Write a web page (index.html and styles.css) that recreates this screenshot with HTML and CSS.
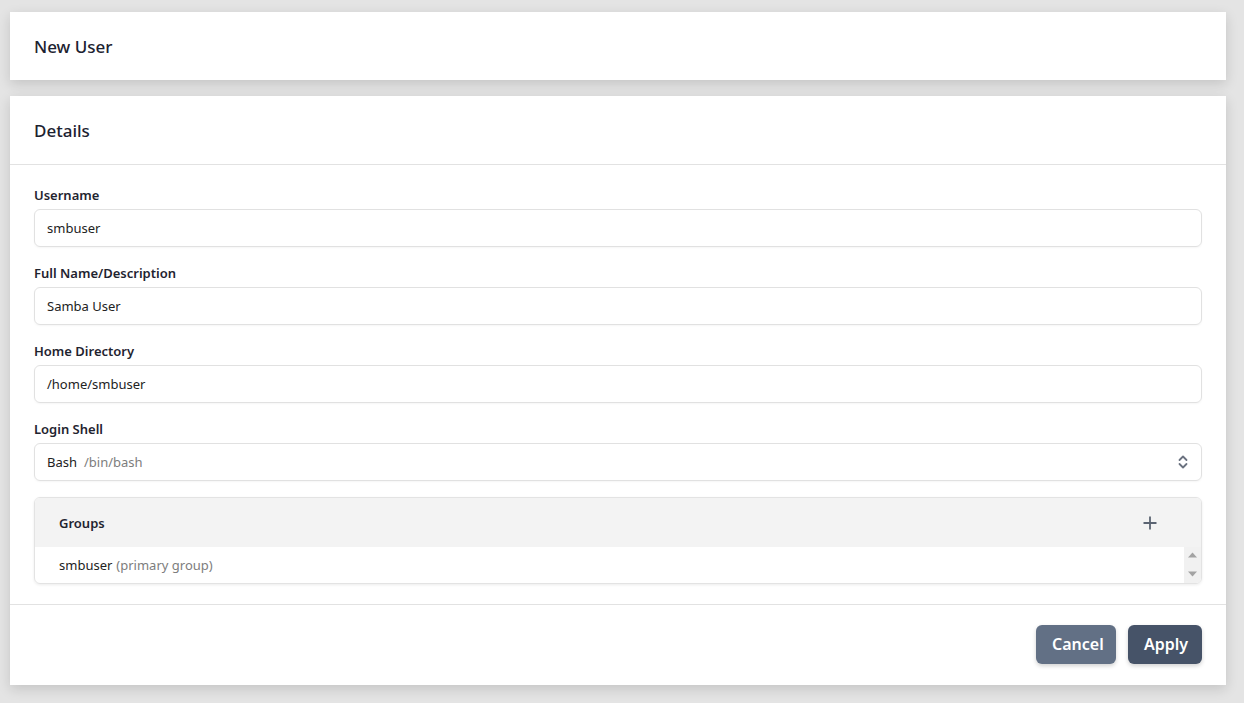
FILE: index.html
```html
<!DOCTYPE html>
<html>
<head>
<meta charset="utf-8">
<link rel="stylesheet" href="styles.css">
</head>
<body>
<div class="page">
  <section class="card title-card">
    <h1 class="card-title">New User</h1>
  </section>
  <section class="card">
    <header class="card-header"><h2 class="card-title">Details</h2></header>
    <div class="card-body">
      <div class="field">
        <label class="label">Username</label>
        <div class="input">smbuser</div>
      </div>
      <div class="field">
        <label class="label">Full Name/Description</label>
        <div class="input">Samba User</div>
      </div>
      <div class="field">
        <label class="label">Home Directory</label>
        <div class="input">/home/smbuser</div>
      </div>
      <div class="field">
        <label class="label">Login Shell</label>
        <div class="input select">
          <span>Bash</span><span class="muted shell-path">/bin/bash</span>
          <svg class="chev" width="12" height="16" viewBox="0 0 12 16"><path d="M2.5 6 6 2.5 9.5 6M2.5 10 6 13.5 9.5 10" fill="none" stroke="#6b7280" stroke-width="1.8" stroke-linecap="round" stroke-linejoin="round"/></svg>
        </div>
      </div>
      <div class="groups">
        <div class="groups-head">
          <span class="groups-title">Groups</span>
          <svg class="plus" width="16" height="16" viewBox="0 0 16 16"><path d="M8 1.5v13M1.5 8h13" stroke="#5b6472" stroke-width="1.8" fill="none"/></svg>
        </div>
        <div class="groups-list">
          <div class="group-row">smbuser <span class="muted">(primary group)</span></div>
          <div class="scrollbar">
            <svg width="9" height="6" viewBox="0 0 9 6"><path d="M0 5.5 4.5 0.5 9 5.5z" fill="#a3a3a3"/></svg>
            <svg width="9" height="6" viewBox="0 0 9 6"><path d="M0 0.5 4.5 5.5 9 0.5z" fill="#a3a3a3"/></svg>
          </div>
        </div>
      </div>
    </div>
    <footer class="card-footer">
      <button class="btn btn-cancel">Cancel</button>
      <button class="btn btn-apply">Apply</button>
    </footer>
  </section>
</div>
</body>
</html>
```
FILE: styles.css
```css
* { box-sizing: border-box; }
html, body { margin: 0; padding: 0; }
body {
  background: #e4e4e4;
  font-family: "Noto Sans", "Open Sans", sans-serif;
  color: #1f2430;
}
.page {
  padding: 12px 18px 18px 10px;
  display: flex;
  flex-direction: column;
  gap: 16px;
}
.card {
  background: #fff;
  box-shadow: 0 4px 12px rgba(0,0,0,0.14);
}
.title-card {
  height: 68px;
  display: flex;
  align-items: center;
  padding: 1px 24px 0;
}
.card-title {
  margin: 0;
  font-size: 17px;
  font-weight: 500;
  color: #1c2230;
}
.card-header {
  height: 69px;
  display: flex;
  align-items: center;
  padding: 1px 24px 0;
  border-bottom: 1px solid #e2e2e2;
}
.card-body {
  padding: 20px 24px 20px;
  display: flex;
  flex-direction: column;
}
.field { margin-bottom: 16px; }
.label {
  display: block;
  font-size: 13px;
  font-weight: 600;
  line-height: 18px;
  padding-top: 1px;
  margin-bottom: 5px;
  color: #1f2430;
}
.input {
  height: 38px;
  border: 1px solid #e1e1e1;
  border-radius: 6px;
  padding: 0 12px;
  display: flex;
  align-items: center;
  font-size: 13px;
  color: #222;
  box-shadow: 0 1px 2px rgba(0,0,0,0.04);
}
.shell-path { margin-left: 7px; }
.muted { color: #7d7d7d; }
.chev { margin-left: auto; }
.groups {
  border: 1px solid #e3e3e3;
  border-radius: 6px;
  overflow: hidden;
  box-shadow: 0 1px 3px rgba(0,0,0,0.08);
}
.groups-head {
  height: 49px;
  background: #f3f3f3;
  display: flex;
  align-items: center;
  justify-content: space-between;
  padding: 0 43px 0 24px;
}
.groups-title {
  font-size: 13px;
  font-weight: 600;
}
.groups-list {
  display: flex;
  height: 36px;
}
.group-row {
  flex: 1;
  display: flex;
  align-items: center;
  gap: 4px;
  padding: 0 24px;
  font-size: 13px;
  color: #222;
}
.scrollbar {
  width: 17px;
  background: #f1f1f1;
  display: flex;
  flex-direction: column;
  align-items: center;
  justify-content: space-between;
  padding: 5px 0 6px;
}
.card-footer {
  border-top: 1px solid #e2e2e2;
  height: 81px;
  display: flex;
  align-items: center;
  justify-content: flex-end;
  gap: 12px;
  padding: 0 24px 2px;
}
.btn {
  height: 39px;
  border: none;
  border-radius: 6px;
  color: #fff;
  font-family: inherit;
  font-size: 16px;
  font-weight: 600;
  padding: 0 16px;
  box-shadow: 0 2px 4px rgba(0,0,0,0.18);
}
.btn-cancel { background: #627085; width: 80px; }
.btn-apply { background: #465368; width: 74px; }
```
